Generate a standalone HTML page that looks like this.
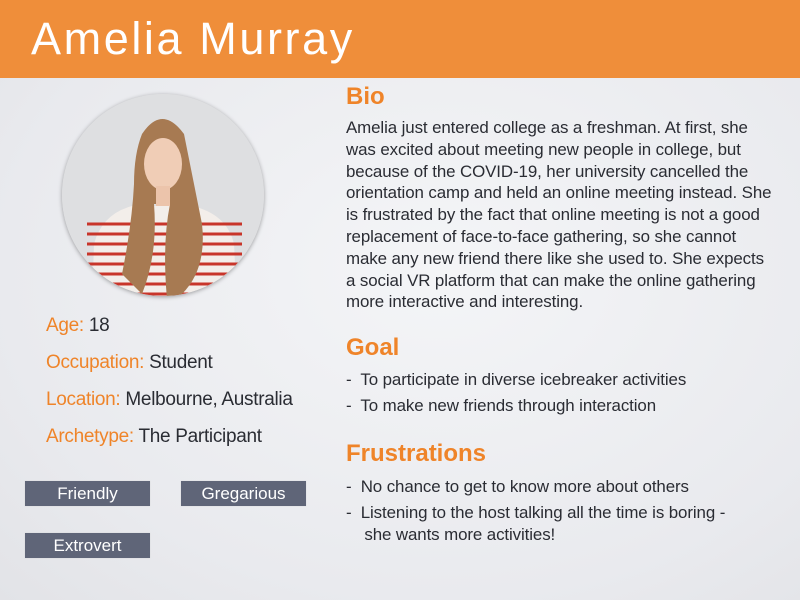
<!DOCTYPE html>
<html><head><meta charset="utf-8"><style>
*{margin:0;padding:0;box-sizing:border-box}
body{width:800px;height:600px;overflow:hidden;background:radial-gradient(ellipse at 55% 45%,#f4f5f7 0%,#e9eaee 70%,#e2e3e7 100%);font-family:"Liberation Sans",sans-serif;color:#2a2c33;position:relative}
.hdr{position:absolute;left:0;top:0;width:800px;height:78px;background:#ef8e3a}
.hdr h1{position:absolute;left:31px;top:13px;font-weight:normal;color:#fff;font-size:45px;letter-spacing:2.6px}
.or{color:#ef8429}
.h2{position:absolute;left:346px;font-size:24px;font-weight:bold;color:#ef8429}
.bio{position:absolute;left:346px;top:117px;font-size:16.9px;line-height:21.8px;white-space:nowrap;letter-spacing:-0.1px}
.li{position:absolute;left:346px;font-size:16.9px;line-height:21.8px;white-space:nowrap;letter-spacing:-0.1px}
.attr{position:absolute;left:46px;font-size:19px;white-space:nowrap;letter-spacing:-0.3px}
.tag{position:absolute;width:125px;height:25px;background:#5f6578;color:#fff;font-size:17px;text-align:center;line-height:25px;box-shadow:0 0 1px #ccc}
.circ{position:absolute;left:62px;top:94px;width:202px;height:202px;border-radius:50%;overflow:hidden;background:#dcdcde;box-shadow:0 1px 4px rgba(0,0,0,.35)}
</style></head><body>
<div class="hdr"><h1>Amelia Murray</h1></div>
<div class="circ">
<svg width="202" height="202" viewBox="0 0 202 202">
<rect width="202" height="202" fill="#dedfe1"/>
<path d="M30 210 L32 150 Q40 120 70 112 L130 112 Q165 120 172 150 L175 210Z" fill="#f3eeea"/>
<g stroke="#c8352a" stroke-width="3">
<line x1="25" y1="130" x2="180" y2="130"/><line x1="25" y1="140" x2="180" y2="140"/><line x1="25" y1="150" x2="180" y2="150"/><line x1="25" y1="160" x2="180" y2="160"/><line x1="25" y1="170" x2="180" y2="170"/><line x1="25" y1="180" x2="180" y2="180"/><line x1="25" y1="190" x2="180" y2="190"/><line x1="25" y1="200" x2="180" y2="200"/></g>
<path d="M80 40 Q100 10 122 40 Q132 90 140 130 Q145 175 120 200 L105 205 Q100 150 108 110 L92 110 Q96 160 80 200 L60 180 Q70 130 72 90 Q72 60 80 40Z" fill="#a77a52"/>
<ellipse cx="101" cy="70" rx="19" ry="26" fill="#f0cdb6"/>
<rect x="94" y="92" width="14" height="20" fill="#ecc4ab"/>
</svg></div>
<div class="attr" style="top:315px"><span class="or">Age:</span> 18</div>
<div class="attr" style="top:352px"><span class="or">Occupation:</span> Student</div>
<div class="attr" style="top:389px"><span class="or">Location:</span> Melbourne, Australia</div>
<div class="attr" style="top:426px"><span class="or">Archetype:</span> The Participant</div>
<div class="tag" style="left:25px;top:481px">Friendly</div>
<div class="tag" style="left:181px;top:481px">Gregarious</div>
<div class="tag" style="left:25px;top:533px">Extrovert</div>
<div class="h2" style="top:83px">Bio</div>
<div class="bio">Amelia just entered college as a freshman. At first, she<br>was excited about meeting new people in college, but<br>because of the COVID-19, her university cancelled the<br>orientation camp and held an online meeting instead. She<br>is frustrated by the fact that online meeting is not a good<br>replacement of face-to-face gathering, so she cannot<br>make any new friend there like she used to. She expects<br>a social VR platform that can make the online gathering<br>more interactive and interesting.</div>
<div class="h2" style="top:334px">Goal</div>
<div class="li" style="top:369px">-&nbsp; To participate in diverse icebreaker activities</div>
<div class="li" style="top:395px">-&nbsp; To make new friends through interaction</div>
<div class="h2" style="top:440px">Frustrations</div>
<div class="li" style="top:476px">-&nbsp; No chance to get to know more about others</div>
<div class="li" style="top:502px">-&nbsp; Listening to the host talking all the time is boring -<br>&nbsp;&nbsp;&nbsp; she wants more activities!</div>
</body></html>
